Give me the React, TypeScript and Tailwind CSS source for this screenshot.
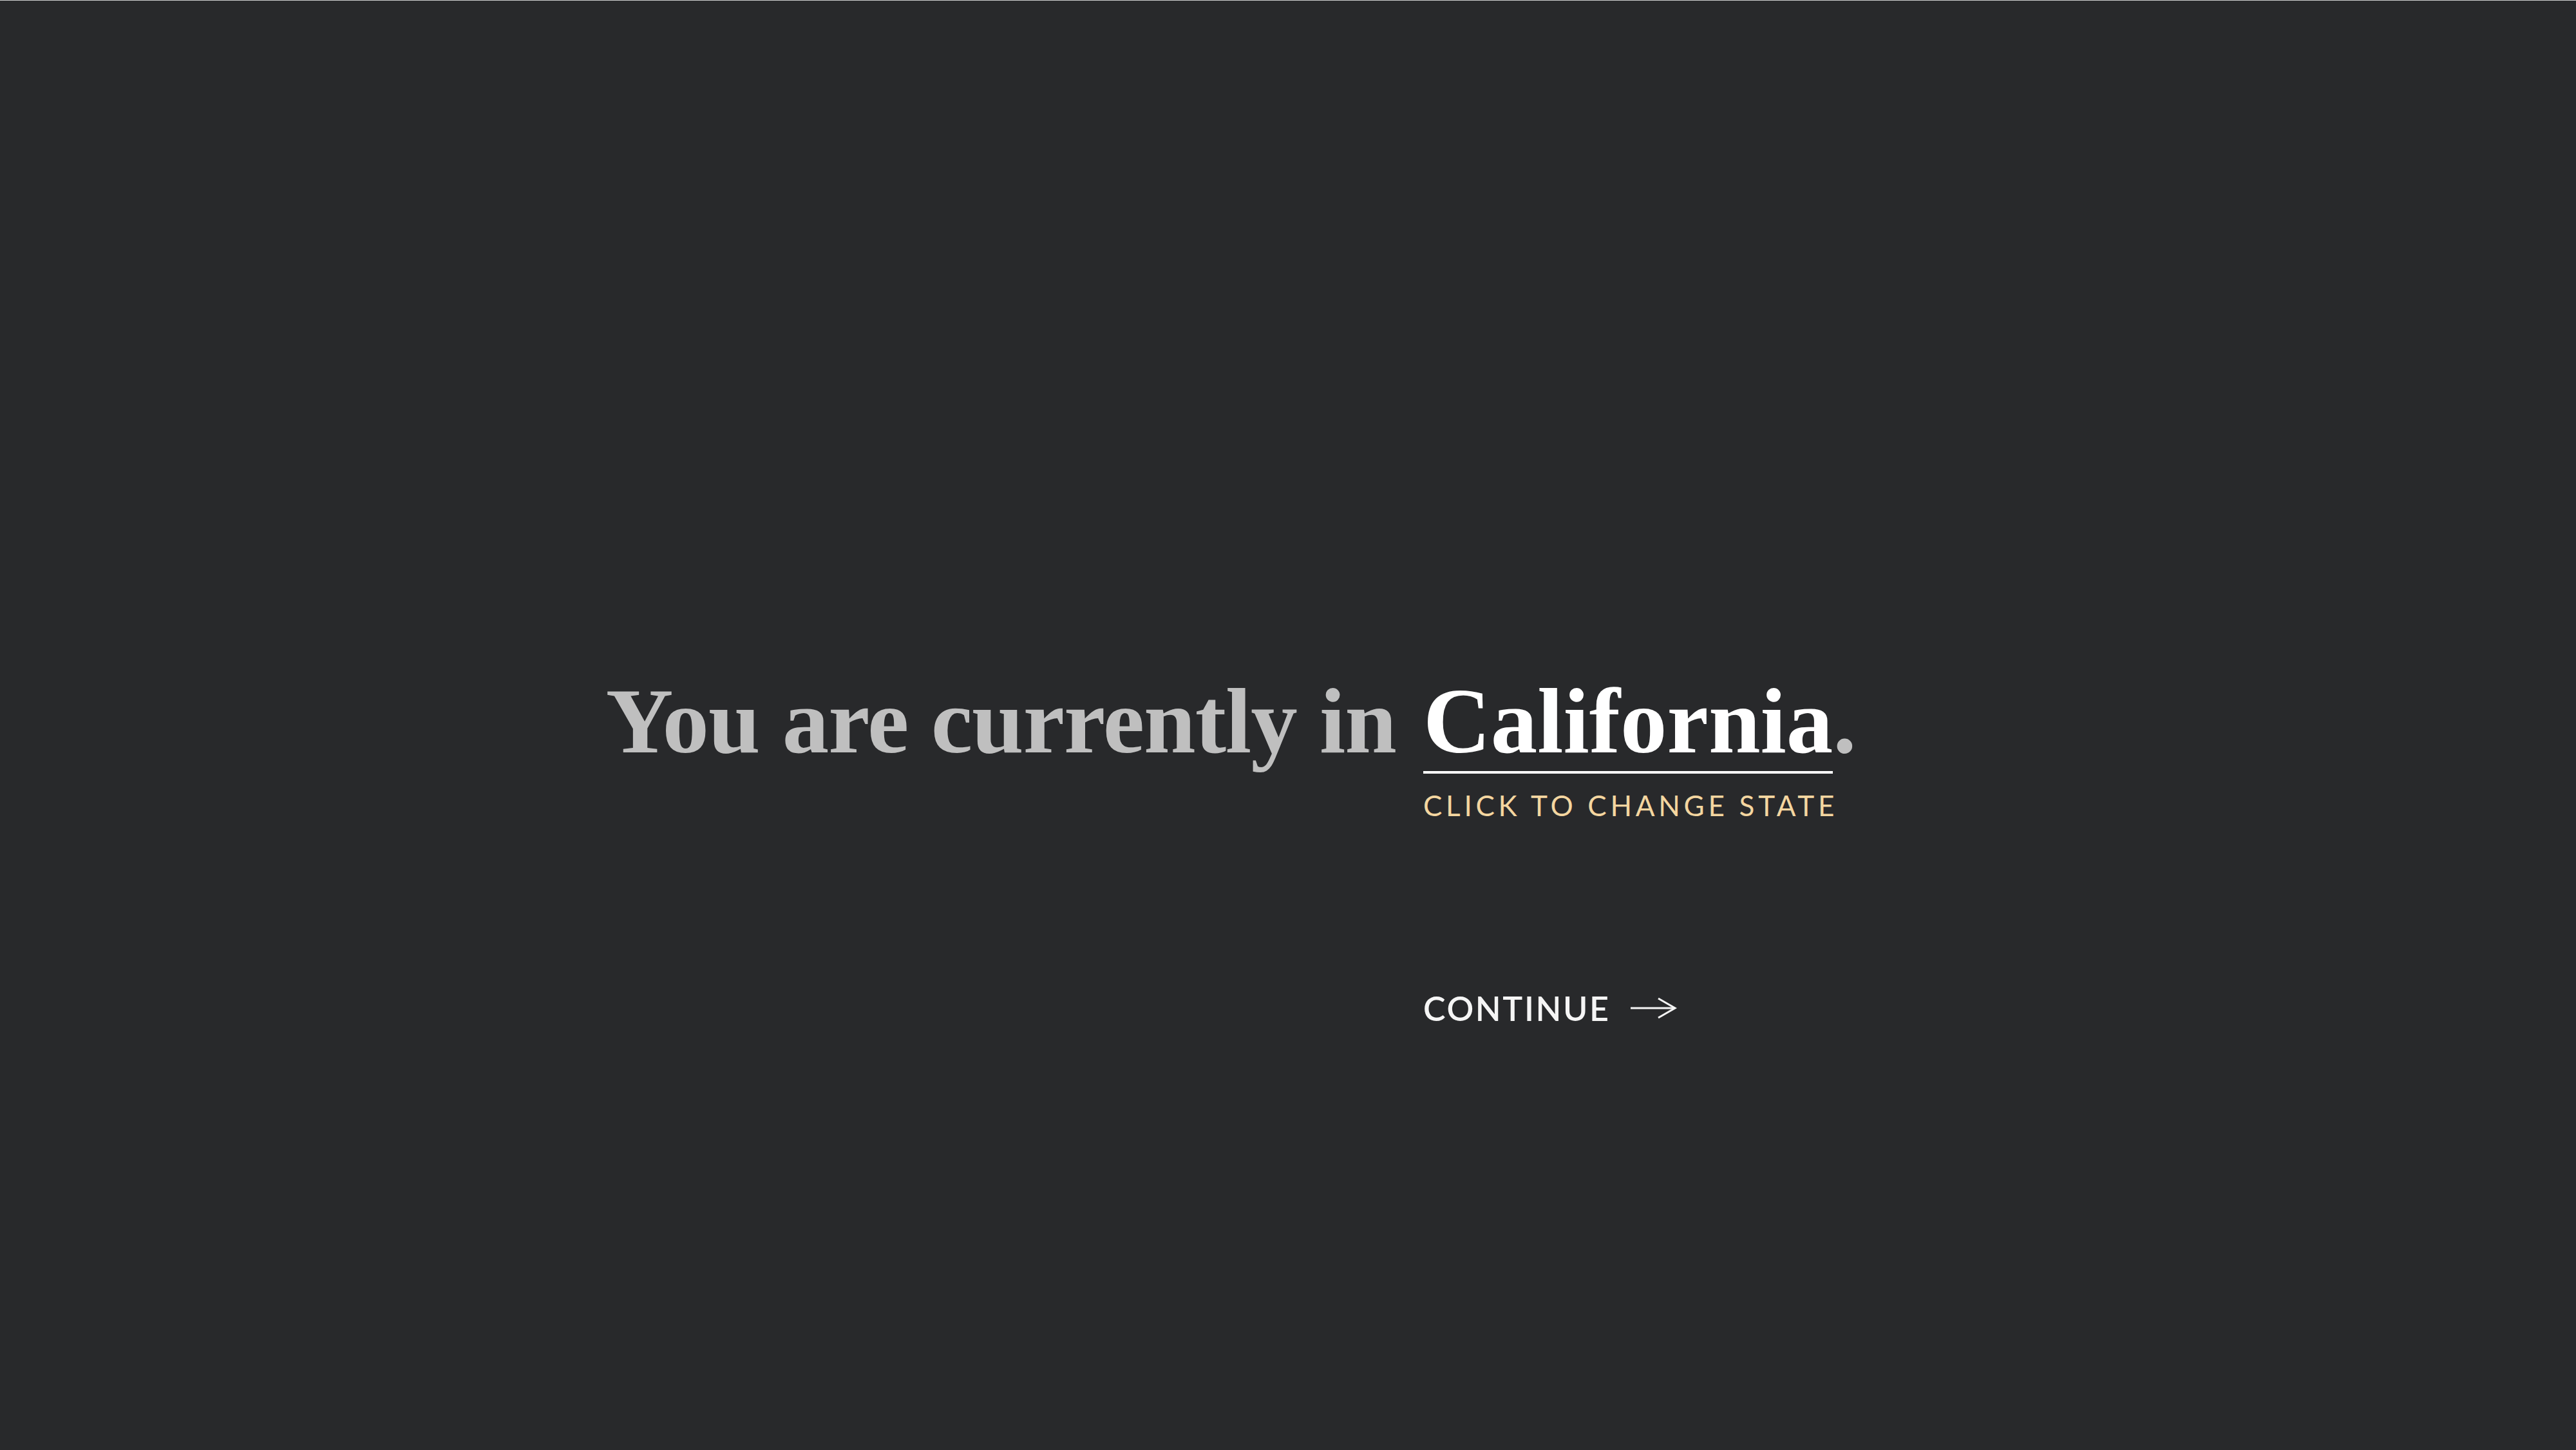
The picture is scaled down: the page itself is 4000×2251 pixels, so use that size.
import React from "react";

export default function App() {
  const serif = { fontFamily: '"Liberation Serif", "Times New Roman", serif' };
  const sans = { fontFamily: 'Lato, "Open Sans", sans-serif' };
  return (
    <div className="w-full min-h-[2251px] bg-[#28292b] border-t border-[#cfcfcf] pt-[1046px]">
      <div className="flex items-baseline">
        <div className="w-[2168px] shrink-0 text-right">
          <span
            style={serif}
            className="text-[145px] leading-none font-bold text-[#bfbfbf] tracking-[-1px] whitespace-nowrap"
          >
            You are currently in
          </span>
        </div>
        <div className="ml-[42px] flex flex-col">
          <div className="flex items-start">
            <div className="flex flex-col">
              <span style={serif} className="text-[145px] leading-none font-bold text-white whitespace-nowrap">
                California
              </span>
              <div className="h-[4px] bg-white mt-[5px]" />
            </div>
            <span style={serif} className="text-[145px] leading-none font-bold text-[#bfbfbf]">
              .
            </span>
          </div>
          <span
            style={sans}
            className="mt-[27px] text-[44px] leading-none text-[#f4d6a0] tracking-[0.13em] whitespace-nowrap"
          >
            CLICK TO CHANGE STATE
          </span>
          <button className="mt-[267px] flex items-center self-start">
            <span
              style={sans}
              className="text-[52px] leading-none font-semibold text-[#f5f5f5] tracking-[0.05em] whitespace-nowrap"
            >
              CONTINUE
            </span>
            <svg width="73" height="34" viewBox="0 0 73 34" className="ml-[30px]" fill="none">
              <path d="M1 17H70" stroke="#f5f5f5" strokeWidth="3" />
              <path d="M44 2L70 17L44 32" stroke="#f5f5f5" strokeWidth="3" />
            </svg>
          </button>
        </div>
      </div>
    </div>
  );
}
